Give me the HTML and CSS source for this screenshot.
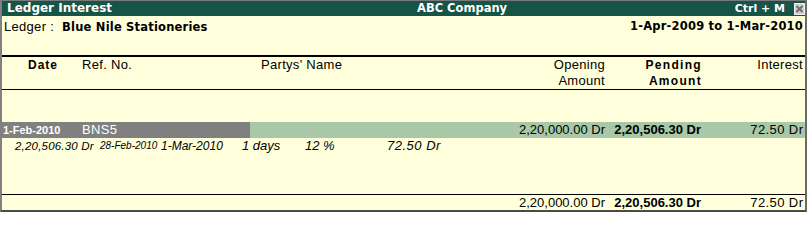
FILE: index.html
```html
<!DOCTYPE html>
<html>
<head>
<meta charset="utf-8">
<link rel="stylesheet" href="styles.css">
</head>
<body>
<div class="window">
  <div class="titlebar">
    <span class="t-title">Ledger Interest</span>
    <span class="t-company">ABC Company</span>
    <span class="t-key">Ctrl + M</span>
    <span class="t-close"><svg width="11" height="12" viewBox="0 0 11 12"><rect x="0" y="0" width="11" height="12" fill="#d0d0d0"/><rect x="0.5" y="0.5" width="10" height="11" fill="none" stroke="#f0f0f0"/><path d="M2.5 3 L8.5 9 M8.5 3 L2.5 9" stroke="#6e6e6e" stroke-width="2"/></svg></span>
  </div>
  <div class="ledger-row">
    <div><span class="lbl">Ledger :</span><span class="ledger-name">Blue Nile Stationeries</span></div>
    <div class="period">1-Apr-2009 to 1-Mar-2010</div>
  </div>
  <div class="rule-thick"></div>
  <div class="cols head">
    <div class="h-date">Date</div>
    <div class="h-ref">Ref. No.</div>
    <div class="h-party">Partys' Name</div>
    <div class="h-open">Opening<br>Amount</div>
    <div class="h-pend">Pending<br>Amount</div>
    <div class="h-int">Interest</div>
  </div>
  <div class="rule"></div>
  <div class="body">
    <div class="cols row sel">
      <div class="c-date">1-Feb-2010</div>
      <div class="c-ref">BNS5</div>
      <div class="c-party"></div>
      <div class="c-open">2,20,000.00 Dr</div>
      <div class="c-pend">2,20,506.30 Dr</div>
      <div class="c-int">72.50 Dr</div>
    </div>
    <div class="detail">
      <span class="d-amt">2,20,506.30 Dr</span>
      <span class="d-date">28-Feb-2010</span>
      <span class="d-date2">1-Mar-2010</span>
      <span class="d-days">1 days</span>
      <span class="d-rate">12 %</span>
      <span class="d-int">72.50 Dr</span>
    </div>
  </div>
  <div class="rule"></div>
  <div class="cols row total">
    <div class="c-date"></div>
    <div class="c-ref"></div>
    <div class="c-party"></div>
    <div class="c-open">2,20,000.00 Dr</div>
    <div class="c-pend">2,20,506.30 Dr</div>
    <div class="c-int">72.50 Dr</div>
  </div>
</div>
</body>
</html>
```

FILE: styles.css
```css
html, body {
  margin: 0;
  padding: 0;
  background: #ffffff;
}
body {
  font-family: "Liberation Sans", Arial, sans-serif;
  font-size: 13px;
  color: #000;
}
.window {
  width: 807px;
  box-sizing: border-box;
  background: #ffffdc;
  border-top: 1px solid #7a7a7a;
  border-left: 2px solid #808080;
  border-right: 2px solid #6a6a6a;
  border-bottom: 2px solid #4a4a4a;
}
.titlebar {
  height: 15px;
  background: #165447;
  color: #ffffff;
  display: grid;
  grid-template-columns: 410px 1fr auto 11px;
  align-items: center;
  padding-left: 5px;
  font-family: "DejaVu Sans", Verdana, sans-serif;
  font-weight: bold;
  font-size: 11px;
  line-height: 15px;
}
.t-title { font-size: 12px; }
.t-company { font-size: 11.5px; }
.t-key { margin-right: 9px; }
.t-close { display: flex; align-items: center; height: 15px; }
.t-close svg { display: block; }

.ledger-row {
  height: 21px;
  display: flex;
  justify-content: space-between;
  align-items: center;
  padding: 0 2px;
  margin-bottom: 18px;
  line-height: 21px;
}
.lbl {
  letter-spacing: 0.3px;
  margin-right: 8px;
}
.ledger-name, .period {
  font-family: "DejaVu Sans", Verdana, sans-serif;
  font-weight: bold;
  font-size: 11.5px;
  letter-spacing: 0.2px;
}
.rule-thick { height: 2px; background: #000; }
.rule { height: 1px; background: #000; }

.cols {
  display: grid;
  grid-template-columns: 78px 170px 250px 105px 96px 102px;
  padding-right: 2px;
}
.head {
  height: 32px;
  line-height: 16px;
  letter-spacing: 0.3px;
}
.h-date {
  padding-left: 26px;
  font-size: 12px;
  font-weight: bold;
  letter-spacing: 1px;
}
.h-ref { padding-left: 2px; }
.h-party { padding-left: 11px; }
.h-open, .h-int { text-align: right; }
.h-pend {
  text-align: right;
  font-size: 12px;
  font-weight: bold;
  letter-spacing: 1.3px;
  margin-right: -1px;
}

.body {
  height: 104px;
  padding-top: 32px;
  box-sizing: border-box;
}
.row {
  height: 16px;
  line-height: 16px;
  font-size: 13px;
}
.sel { background: #a8c8a8; }
.sel .c-date, .sel .c-ref {
  background: #808080;
  color: #ffffff;
}
.c-date {
  padding-left: 1px;
  font-size: 11px;
  font-weight: bold;
}
.c-ref {
  padding-left: 2px;
  font-size: 13px;
  letter-spacing: 0.3px;
}
.c-open { text-align: right; }
.c-pend { text-align: right; font-weight: bold; }
.c-int {
  text-align: right;
  font-size: 13px;
  letter-spacing: 0.4px;
  margin-right: -0.4px;
}

.detail {
  height: 16px;
  line-height: 16px;
  display: grid;
  grid-template-columns: 85px 61px 81px 63px 82px auto;
  padding-left: 13px;
  font-style: italic;
  font-size: 11.5px;
}
.d-amt { letter-spacing: 0.2px; }
.d-date { font-size: 10px; }
.d-date2 { font-size: 12px; }
.d-days, .d-rate { font-size: 13px; }
.d-int { font-size: 13px; letter-spacing: 0.5px; }

.total {
  height: 15px;
  line-height: 15px;
}
```
